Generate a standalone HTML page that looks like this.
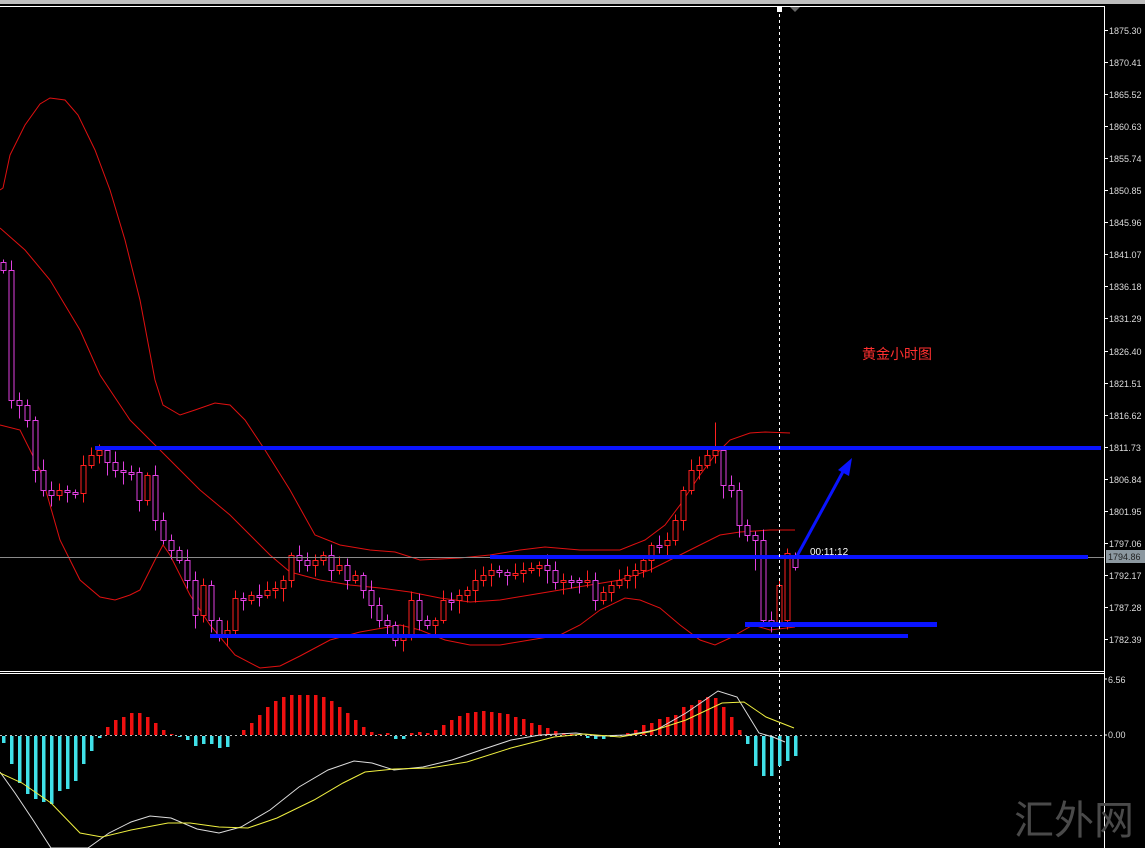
<!DOCTYPE html>
<html><head><meta charset="utf-8"><style>
html,body{margin:0;padding:0;background:#000;width:1145px;height:848px;overflow:hidden}
svg{display:block}
text{font-family:"Liberation Sans","Noto Sans CJK SC",sans-serif}
</style></head><body>
<svg id="s" width="1145" height="848" xmlns="http://www.w3.org/2000/svg">
<rect width="1145" height="848" fill="#000"/>
<rect x="0" y="0" width="1145" height="4" fill="#bdbdbd"/>
<line x1="0" y1="6.5" x2="1104" y2="6.5" stroke="#fff"/>
<line x1="1104.5" y1="6" x2="1104.5" y2="848" stroke="#fff"/>
<line x1="0" y1="671.5" x2="1104" y2="671.5" stroke="#fff"/>
<line x1="0" y1="673.5" x2="1104" y2="673.5" stroke="#fff"/>
<g id="axis"></g>
<polyline fill="none" stroke="#e01010" stroke-width="1" points="0,190 3,188 10,155 25,125 40,104 50,98 65,100 78,115 95,150 110,190 125,240 140,300 155,380 163,405 180,415 195,410 215,403 230,405 245,420 265,450 290,490 315,535 340,545 370,550 395,552 420,560 460,558 490,555 520,550 545,547 580,550 620,550 645,540 665,525 680,505 700,475 715,455 730,440 750,433 765,432 790,433"/>
<polyline fill="none" stroke="#e01010" points="0,228 25,250 50,280 80,330 100,375 130,420 150,440 170,460 200,490 230,515 255,540 270,555 290,572 320,580 350,585 380,588 410,592 440,598 470,602 500,600 530,595 560,590 590,585 620,580 650,570 680,555 700,545 720,535 740,532 770,530 795,530"/>
<polyline fill="none" stroke="#e01010" points="0,425 20,430 40,470 60,540 80,580 100,597 115,600 130,595 140,590 155,560 163,545 170,555 190,595 210,625 235,655 260,668 280,666 300,656 330,640 360,632 400,625 420,630 445,640 470,645 500,645 530,640 560,635 580,625 600,610 625,598 640,600 660,608 680,625 700,640 715,645 730,638 753,625 770,630 795,627"/>
<g id="candles"></g>
<line x1="0" y1="557.5" x2="1104" y2="557.5" stroke="#8a8a8a"/>
<rect x="95" y="446" width="1006" height="4" fill="#0a14ff"/>
<rect x="490" y="555" width="598" height="4" fill="#0a14ff"/>
<rect x="210" y="634" width="698" height="4" fill="#0a14ff"/>
<rect x="745" y="622" width="192" height="5" fill="#0a14ff"/>
<line x1="797" y1="556" x2="845" y2="468" stroke="#0a14ff" stroke-width="3"/>
<polygon points="852,458 849,476 838,470" fill="#0a14ff"/>
<line x1="779.5" y1="8" x2="779.5" y2="848" stroke="#fff" stroke-dasharray="3,3"/>
<rect x="777" y="7" width="5" height="5" fill="#fff"/>
<polygon points="790,7 800,7 795,12" fill="#666"/>
<text x="810" y="555" fill="#fff" font-size="10">00:11:12</text>
<rect x="1106" y="550" width="39" height="13" fill="#8c98a0"/>
<text x="1108" y="560" fill="#222" font-size="9">1794.86</text>
<text x="862" y="359" fill="#ff3030" font-size="14">黄金小时图</text>
<line x1="0" y1="735.5" x2="1104" y2="735.5" stroke="#bbb" stroke-dasharray="2,3"/>
<g id="hist"></g>
<polyline fill="none" stroke="#ddd" points="0,772 15,793 33,820 51,848 88,848 109,833 131,822 150,816 171,818 197,829 219,833 241,827 270,810 299,787 328,770 354,761 372,763 394,770 423,767 452,760 481,750 511,740 540,735 576,733 598,736 627,735 656,730 686,713 718,691 737,697 759,733 773,737 785,742"/>
<polyline fill="none" stroke="#f0f040" points="0,773 22,783 51,803 80,833 102,837 131,830 168,823 190,823 219,827 248,828 277,818 314,800 343,783 365,772 394,769 430,768 467,762 511,748 554,737 584,734 620,737 649,732 686,720 722,703 744,702 766,717 794,728"/>
<text x="1108" y="683" fill="#ddd" font-size="9">6.56</text>
<line x1="1104" y1="679" x2="1107" y2="679" stroke="#fff"/>
<text x="1108" y="738" fill="#ddd" font-size="9">0.00</text>
<line x1="1104" y1="735" x2="1107" y2="735" stroke="#fff"/>
<text x="1014" y="834" fill="#4a4a4a" font-size="40" font-family="'Noto Serif CJK SC',serif">汇外网</text>
</svg>
<script>
(function(){
var NS="http://www.w3.org/2000/svg";
function el(p,t,a){var e=document.createElementNS(NS,t);for(var k in a)e.setAttribute(k,a[k]);p.appendChild(e);return e;}
var ax=document.getElementById("axis");
var labs=["1875.30","1870.41","1865.52","1860.63","1855.74","1850.85","1845.96","1841.07","1836.18","1831.29","1826.40","1821.51","1816.62","1811.73","1806.84","1801.95","1797.06","1792.17","1787.28","1782.39"];
labs.forEach(function(l,i){var y=Math.round(30+i*32.05);el(ax,"line",{x1:1104,y1:y+.5,x2:1108,y2:y+.5,stroke:"#fff"});var t=el(ax,"text",{x:1109,y:y+4,fill:"#ddd","font-size":"9"});t.textContent=l;});
var C=[270,400,405,420,470,490,495,490,492,493,465,455,450,462,470,472,472,500,475,520,540,550,560,580,615,585,620,635,630,598,600,595,595,590,588,580,555,560,565,560,555,570,565,580,575,590,605,620,625,640,635,600,620,625,620,600,600,595,590,580,575,570,572,575,573,570,568,565,570,582,580,580,582,580,600,592,585,580,575,570,560,545,545,540,520,490,470,465,455,450,485,490,525,535,540,620,622,585,553,565,567];
var cg=document.getElementById("candles");
for(var k=0;k<100;k++){var x=3.5+8*k;var o=k==0?262:C[k-1];var c=C[k];
 if(k==98){o=620;c=553}if(k==99){o=555;c=567}
 var tp=Math.min(o,c)+0.5,bt=Math.max(o,c)+0.5;if(bt-tp<2){bt=tp+2}
 var col=c<o?"#ff2020":"#e040e0";
 var w1=3+((k*7)%9),w2=3+((k*5)%11);
 if(k==89)w1=28; if(k==94)w2=30; if(k==1)w1=10;
 el(cg,"line",{x1:x,y1:tp-w1,x2:x,y2:bt+w2,stroke:col});
 el(cg,"rect",{x:x-2.5+0.0,y:tp,width:5,height:bt-tp,fill:"#000",stroke:col});}
var H=[-7,-28,-47,-58,-63,-66,-68,-55,-53,-45,-28,-15,-2,8,15,18,22,22,18,12,5,1,-1,-4,-10,-8,-8,-12,-11,0,5,12,20,28,34,38,40,40,40,40,38,34,28,22,15,8,3,1,2,-3,-3,2,3,2,5,10,15,19,22,23,24,23,22,21,18,16,12,10,7,4,2,1,0,-2,-3,-3,-1,0,2,5,10,12,16,18,20,28,30,35,38,37,28,18,5,-8,-30,-40,-40,-30,-25,-20];
var hg=document.getElementById("hist");
for(var k=0;k<100;k++){var h=H[k];if(!h)continue;var x=2+8*k;
 if(h>0)el(hg,"rect",{x:x,y:735-h,width:3.5,height:h,fill:"#f01010"});
 else el(hg,"rect",{x:x,y:736,width:3.5,height:-h,fill:"#40e0e8"});}
})();
</script>
</body></html>
